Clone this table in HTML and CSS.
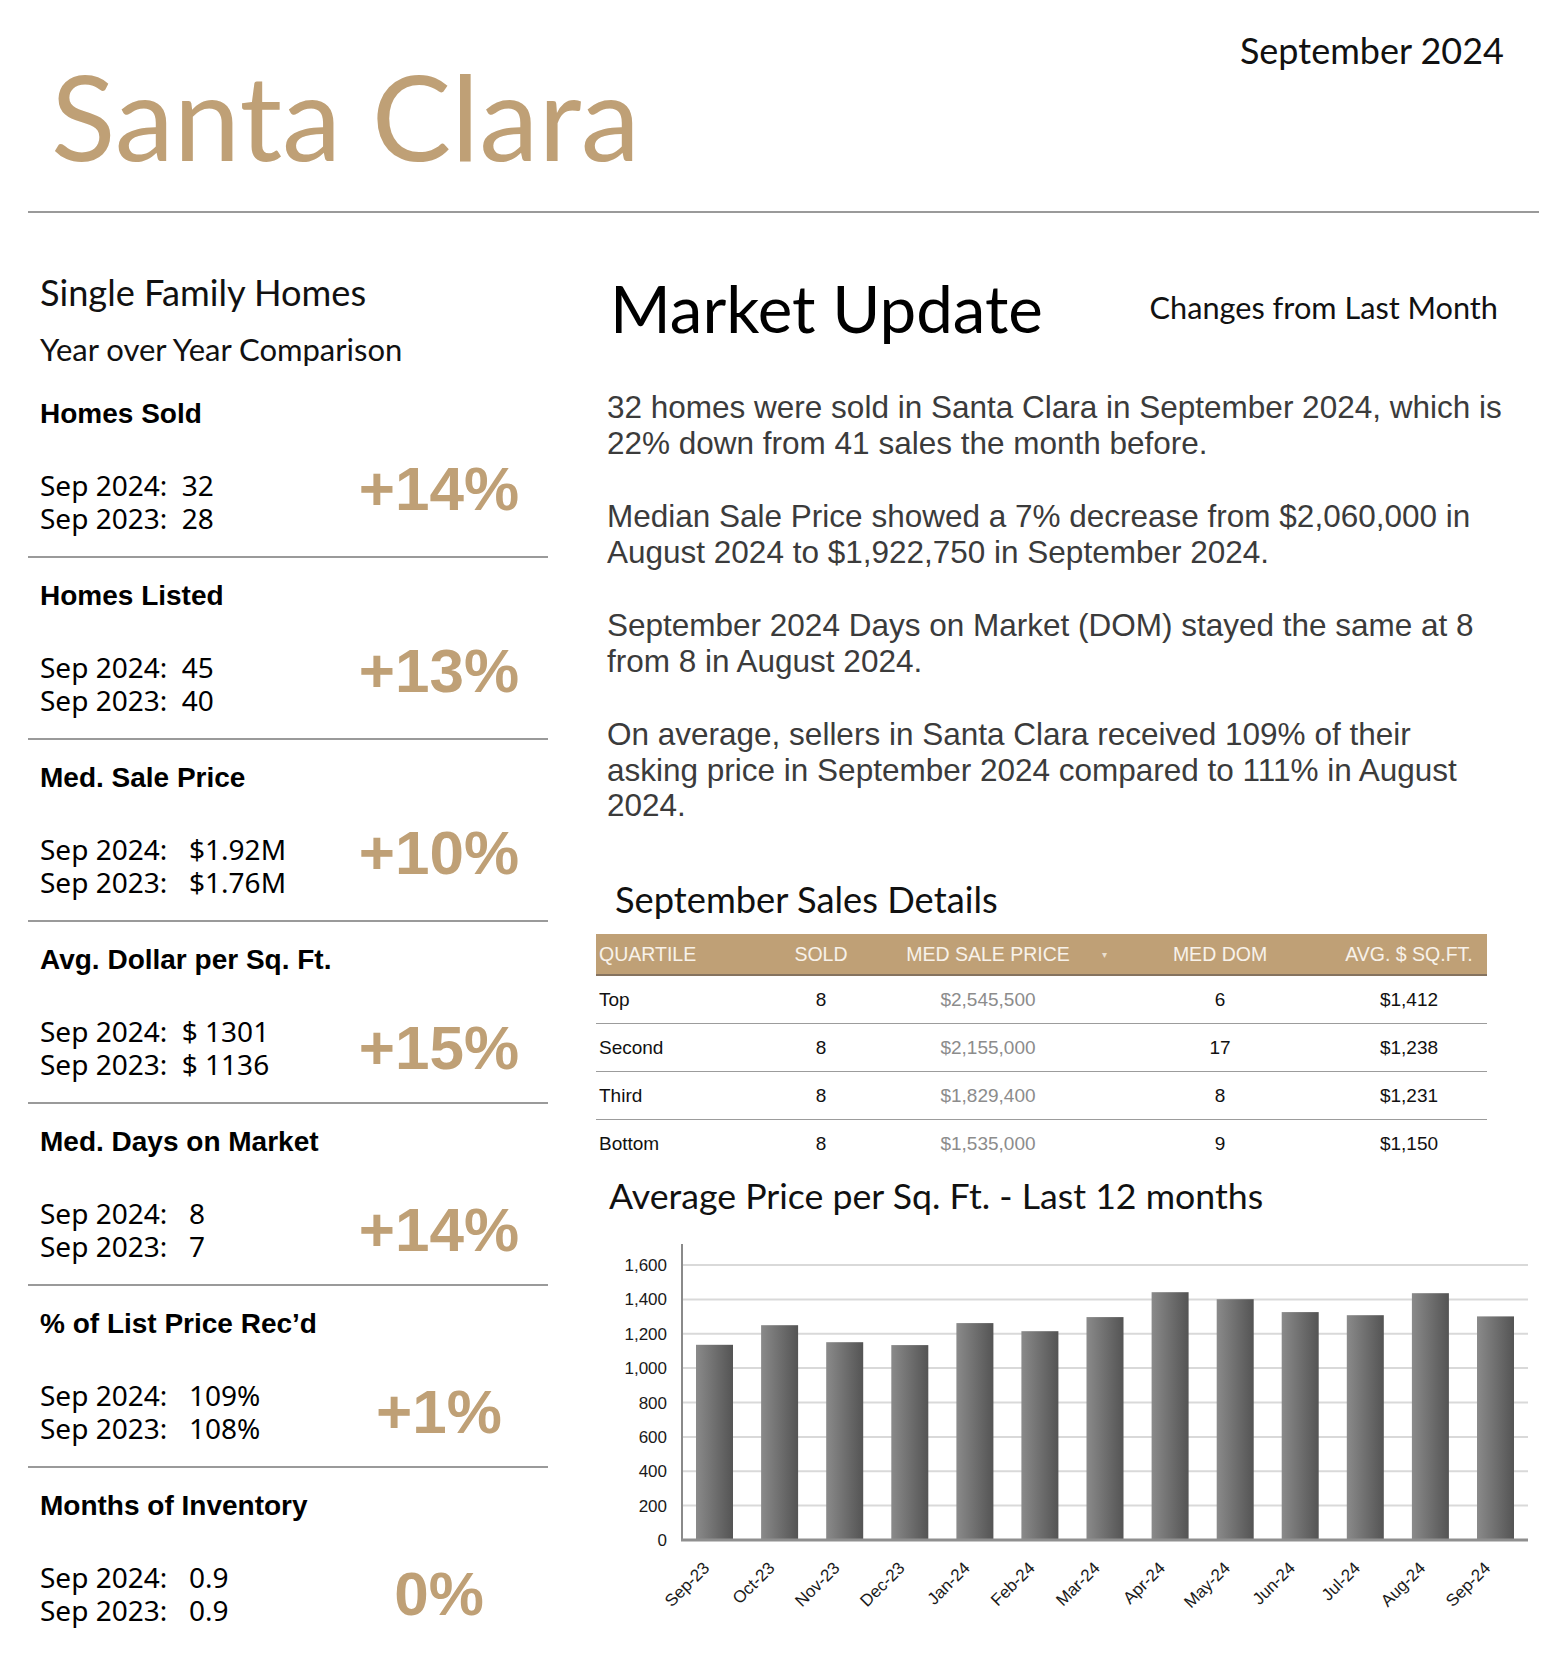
FILE: index.html
```html
<!DOCTYPE html>
<html lang="en">
<head>
<meta charset="utf-8">
<title>Santa Clara Market Update – September 2024</title>
<link rel="stylesheet" href="styles.css">
</head>
<body>
<div class="page">
  <header class="masthead">
    <h1 class="city">Santa Clara</h1>
    <div class="date">September 2024</div>
  </header>
  <div class="rule"></div>

  <main class="columns">
    <section class="left">
      <h2 class="sfh">Single Family Homes</h2>
      <div class="yoy">Year over Year Comparison</div>

      <div class="stat">
        <div class="stat-label">Homes Sold</div>
        <div class="stat-body">
          <div class="stat-values"><div>Sep 2024:  32</div><div>Sep 2023:  28</div></div>
          <div class="stat-pct up">+14%</div>
        </div>
      </div>

      <div class="stat">
        <div class="stat-label">Homes Listed</div>
        <div class="stat-body">
          <div class="stat-values"><div>Sep 2024:  45</div><div>Sep 2023:  40</div></div>
          <div class="stat-pct up">+13%</div>
        </div>
      </div>

      <div class="stat">
        <div class="stat-label">Med. Sale Price</div>
        <div class="stat-body">
          <div class="stat-values"><div>Sep 2024:   $1.92M</div><div>Sep 2023:   $1.76M</div></div>
          <div class="stat-pct up">+10%</div>
        </div>
      </div>

      <div class="stat">
        <div class="stat-label">Avg. Dollar per Sq. Ft.</div>
        <div class="stat-body">
          <div class="stat-values"><div>Sep 2024:  $ 1301</div><div>Sep 2023:  $ 1136</div></div>
          <div class="stat-pct">+15%</div>
        </div>
      </div>

      <div class="stat">
        <div class="stat-label">Med. Days on Market</div>
        <div class="stat-body">
          <div class="stat-values"><div>Sep 2024:   8</div><div>Sep 2023:   7</div></div>
          <div class="stat-pct">+14%</div>
        </div>
      </div>

      <div class="stat">
        <div class="stat-label">% of List Price Rec’d</div>
        <div class="stat-body">
          <div class="stat-values"><div>Sep 2024:   109%</div><div>Sep 2023:   108%</div></div>
          <div class="stat-pct">+1%</div>
        </div>
      </div>

      <div class="stat">
        <div class="stat-label">Months of Inventory</div>
        <div class="stat-body">
          <div class="stat-values"><div>Sep 2024:   0.9</div><div>Sep 2023:   0.9</div></div>
          <div class="stat-pct">0%</div>
        </div>
      </div>
    </section>

    <section class="right">
      <div class="mu-row">
        <h2 class="mu">Market Update</h2>
        <div class="changes">Changes from Last Month</div>
      </div>

      <div class="summary">
        <p>32 homes were sold in Santa Clara in September 2024, which is<br>22% down from 41 sales the month before.</p>
        <p>Median Sale Price showed a 7% decrease from $2,060,000 in<br>August 2024 to $1,922,750 in September 2024.</p>
        <p>September 2024 Days on Market (DOM) stayed the same at 8<br>from 8 in August 2024.</p>
        <p>On average, sellers in Santa Clara received 109% of their<br>asking price in September 2024 compared to 111% in August<br>2024.</p>
      </div>

      <h3 class="details-title">September Sales Details</h3>
      <table class="details">
        <colgroup>
          <col class="c-q"><col class="c-sold"><col class="c-price"><col class="c-dom"><col class="c-avg">
        </colgroup>
        <thead>
          <tr>
            <th class="t-left">QUARTILE</th>
            <th>SOLD</th>
            <th class="sort">MED SALE PRICE<span class="sort-arrow">▾</span></th>
            <th>MED DOM</th>
            <th class="t-avg">AVG. $ SQ.FT.</th>
          </tr>
        </thead>
        <tbody>
          <tr><td class="t-left">Top</td><td>8</td><td class="price">$2,545,500</td><td>6</td><td class="t-avg">$1,412</td></tr>
          <tr><td class="t-left">Second</td><td>8</td><td class="price">$2,155,000</td><td>17</td><td class="t-avg">$1,238</td></tr>
          <tr><td class="t-left">Third</td><td>8</td><td class="price">$1,829,400</td><td>8</td><td class="t-avg">$1,231</td></tr>
          <tr><td class="t-left">Bottom</td><td>8</td><td class="price">$1,535,000</td><td>9</td><td class="t-avg">$1,150</td></tr>
        </tbody>
      </table>

      <h3 class="chart-title">Average Price per Sq. Ft. - Last 12 months</h3>
      <svg class="chart" width="940" height="400" viewBox="0 0 940 400" xmlns="http://www.w3.org/2000/svg">
        <defs>
          <linearGradient id="barGrad" x1="0" y1="0" x2="1" y2="0">
            <stop offset="0" stop-color="#8a8a8a"/>
            <stop offset="1" stop-color="#545454"/>
          </linearGradient>
        </defs>
        <g class="grid">
          <line x1="82" y1="279.6" x2="928" y2="279.6"/>
          <line x1="82" y1="245.25" x2="928" y2="245.25"/>
          <line x1="82" y1="210.9" x2="928" y2="210.9"/>
          <line x1="82" y1="176.5" x2="928" y2="176.5"/>
          <line x1="82" y1="142.1" x2="928" y2="142.1"/>
          <line x1="82" y1="107.75" x2="928" y2="107.75"/>
          <line x1="82" y1="73.4" x2="928" y2="73.4"/>
          <line x1="82" y1="39" x2="928" y2="39"/>
        </g>
        <g class="bars" fill="url(#barGrad)">
          <rect x="96.0" y="118.8" width="37" height="195.2"/>
          <rect x="161.1" y="99.2" width="37" height="214.8"/>
          <rect x="226.2" y="116.2" width="37" height="197.8"/>
          <rect x="291.3" y="119.1" width="37" height="194.9"/>
          <rect x="356.4" y="97.1" width="37" height="216.9"/>
          <rect x="421.4" y="105.2" width="37" height="208.8"/>
          <rect x="486.5" y="91.1" width="37" height="222.9"/>
          <rect x="551.6" y="66.2" width="37" height="247.8"/>
          <rect x="616.7" y="73.2" width="37" height="240.8"/>
          <rect x="681.7" y="86.1" width="37" height="227.9"/>
          <rect x="746.8" y="89.2" width="37" height="224.8"/>
          <rect x="811.9" y="67.2" width="37" height="246.8"/>
          <rect x="877.0" y="90.4" width="37" height="223.6"/>
        </g>
        <line class="yaxis" x1="82" y1="18" x2="82" y2="315"/>
        <line class="xaxis" x1="81" y1="314" x2="928" y2="314"/>
        <g class="ylabels">
          <text x="67" y="320">0</text>
          <text x="67" y="285.6">200</text>
          <text x="67" y="251.2">400</text>
          <text x="67" y="216.9">600</text>
          <text x="67" y="182.5">800</text>
          <text x="67" y="148.1">1,000</text>
          <text x="67" y="113.8">1,200</text>
          <text x="67" y="79.4">1,400</text>
          <text x="67" y="45">1,600</text>
        </g>
        <g class="xlabels">
          <text transform="translate(110.5 343) rotate(-45)">Sep-23</text>
          <text transform="translate(175.6 343) rotate(-45)">Oct-23</text>
          <text transform="translate(240.7 343) rotate(-45)">Nov-23</text>
          <text transform="translate(305.8 343) rotate(-45)">Dec-23</text>
          <text transform="translate(370.9 343) rotate(-45)">Jan-24</text>
          <text transform="translate(435.9 343) rotate(-45)">Feb-24</text>
          <text transform="translate(501.0 343) rotate(-45)">Mar-24</text>
          <text transform="translate(566.1 343) rotate(-45)">Apr-24</text>
          <text transform="translate(631.2 343) rotate(-45)">May-24</text>
          <text transform="translate(696.2 343) rotate(-45)">Jun-24</text>
          <text transform="translate(761.3 343) rotate(-45)">Jul-24</text>
          <text transform="translate(826.4 343) rotate(-45)">Aug-24</text>
          <text transform="translate(891.5 343) rotate(-45)">Sep-24</text>
        </g>
      </svg>
    </section>
  </main>
</div>
</body>
</html>
```

FILE: styles.css
```css
html, body {
  margin: 0;
  padding: 0;
  background: #ffffff;
}

.page {
  width: 1566px;
  box-sizing: border-box;
  padding: 0 27px 0 28px;
  color: #111111;
  font-family: "Liberation Sans", Arial, sans-serif;
}

/* ---------- masthead ---------- */
.masthead {
  display: flex;
  justify-content: space-between;
  align-items: flex-start;
}

.city {
  margin: 50px 0 0 23px;
  font-family: Lato, "Open Sans", sans-serif;
  font-weight: 400;
  font-size: 119px;
  line-height: 130px;
  color: #bfa076;
}

.date {
  margin: 28px 35px 0 0;
  font-family: Lato, "Open Sans", sans-serif;
  font-size: 36px;
  line-height: 44px;
  color: #111111;
}

.rule {
  height: 2px;
  margin-top: 31px;
  background: #9a9a9a;
}

/* ---------- columns ---------- */
.columns {
  display: flex;
  gap: 48px;
}

.left {
  width: 520px;
  flex: none;
  padding-top: 57px;
}

.right {
  flex: 1;
  min-width: 0;
  padding-top: 55px;
}

/* ---------- left column ---------- */
.sfh {
  margin: 0 0 0 12px;
  font-family: Lato, "Open Sans", sans-serif;
  font-weight: 400;
  font-size: 36.2px;
  line-height: 44px;
}

.yoy {
  margin: 15px 0 0 12px;
  font-family: Lato, "Open Sans", sans-serif;
  font-size: 31px;
  line-height: 40px;
}

.stat {
  padding: 21px 0 21.5px 12px;
  border-bottom: 2px solid #9a9a9a;
}

.yoy + .stat {
  margin-top: 7px;
}

.stat:last-child {
  border-bottom: none;
}

.stat-label {
  font-family: "Liberation Sans", Arial, sans-serif;
  font-weight: 700;
  font-size: 28px;
  line-height: 34px;
  color: #000000;
}

.stat-body {
  display: grid;
  grid-template-columns: 290px 1fr;
  align-items: center;
  margin-top: 37.5px;
}

.stat-values {
  font-family: "Noto Sans", "Open Sans", sans-serif;
  font-size: 28px;
  line-height: 33px;
  white-space: pre;
  color: #000000;
}

.stat-pct {
  text-align: center;
  font-family: "Liberation Sans", Arial, sans-serif;
  font-weight: 700;
  font-size: 62px;
  line-height: 50px;
  color: #bfa076;
}

.stat-pct.up {
  line-height: 40px;
  margin-bottom: 26px;
}

/* ---------- right column ---------- */
.mu-row {
  display: flex;
  justify-content: space-between;
  align-items: center;
  height: 80px;
}

.mu {
  margin: 0 0 0 14px;
  font-family: Lato, "Open Sans", sans-serif;
  font-weight: 400;
  font-size: 65.5px;
  line-height: 76px;
  color: #000000;
}

.changes {
  margin-right: 41px;
  font-family: Lato, "Open Sans", sans-serif;
  font-size: 30.7px;
  line-height: 36px;
  color: #111111;
}

.summary {
  margin-top: 42px;
  padding-left: 11px;
  font-family: "Liberation Sans", Arial, sans-serif;
  font-size: 31.5px;
  line-height: 35.5px;
  color: #3b3b3b;
  white-space: nowrap;
}

.summary p {
  margin: 0 0 38px;
}

.summary p:last-child {
  margin-bottom: 0;
}

.details-title {
  margin: 53.5px 0 0 19px;
  font-family: Lato, "Open Sans", sans-serif;
  font-weight: 400;
  font-size: 36.3px;
  line-height: 44px;
  color: #111111;
}

.details {
  margin-top: 13px;
  width: 891px;
  border-collapse: collapse;
  table-layout: fixed;
  font-family: "Liberation Sans", Arial, sans-serif;
  font-size: 19px;
}

.c-q { width: 170px; }
.c-sold { width: 110px; }
.c-price { width: 224px; }
.c-dom { width: 240px; }
.c-avg { width: 147px; }

.details th {
  height: 40px;
  padding: 0;
  background: #bfa076;
  color: #f8f2ea;
  font-weight: 400;
  font-size: 19.5px;
  text-align: center;
  border-bottom: 2px solid #85735f;
}

.details td {
  height: 47px;
  padding: 0;
  text-align: center;
  color: #111111;
  border-bottom: 1px solid #9c9c9c;
}

.details tbody tr:last-child td {
  border-bottom: none;
}

.details .t-left {
  text-align: left;
  padding-left: 3px;
}

.details .t-avg {
  padding-right: 9px;
}

.details td.price {
  color: #8c8c8c;
}

.details th.sort {
  position: relative;
}

.sort-arrow {
  position: absolute;
  left: calc(100% + 2px);
  top: 50%;
  transform: translateY(-50%);
  font-size: 10px;
  color: #eadfcf;
}

.chart-title {
  margin: 7px 0 0 13px;
  font-family: Lato, "Open Sans", sans-serif;
  font-weight: 400;
  font-size: 35.7px;
  line-height: 44px;
  color: #111111;
}

.chart {
  display: block;
  margin: 8px 0 0 4px;
  overflow: visible;
}

.chart .grid line {
  stroke: #d9d9d9;
  stroke-width: 2;
}

.chart .yaxis {
  stroke: #8a8a8a;
  stroke-width: 2;
}

.chart .xaxis {
  stroke: #8f8f8f;
  stroke-width: 3;
}

.chart text {
  font-family: "Liberation Sans", Arial, sans-serif;
  font-size: 17px;
  fill: #1a1a1a;
}

.chart .ylabels text {
  text-anchor: end;
}

.chart .xlabels text {
  text-anchor: end;
}
```
